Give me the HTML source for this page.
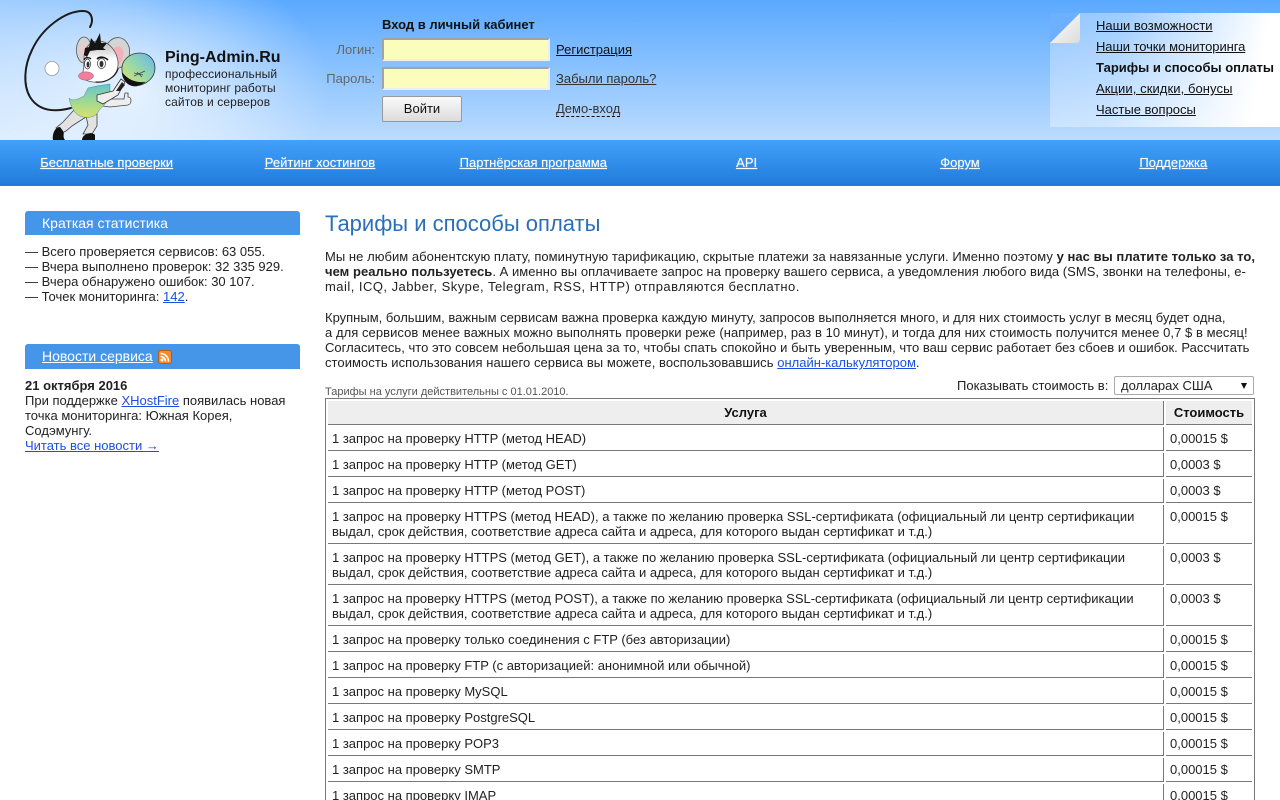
<!DOCTYPE html>
<html lang="ru"><head><meta charset="utf-8"><title>Тарифы и способы оплаты</title>
<style>
html,body{margin:0;padding:0;width:1280px;height:800px;overflow:hidden;background:#fff}
body{position:relative;font:13px/15px "Liberation Sans",Arial,sans-serif;color:#222}
.a{position:absolute;white-space:nowrap}
a{color:inherit;text-decoration:underline}
#hd{position:absolute;left:0;top:0;width:1280px;height:140px;background:radial-gradient(ellipse 195px 135px at 135px 90px,rgba(255,255,255,.72),rgba(255,255,255,.4) 50%,rgba(255,255,255,0)),linear-gradient(90deg,rgba(255,255,255,.4),rgba(255,255,255,0) 170px),linear-gradient(#5aa9ff,#bcdcff)}
#nav{position:absolute;left:0;top:140px;width:1280px;height:46px;background:linear-gradient(#42a1fb,#207ad9)}
#nav a{position:absolute;top:15px;width:213.33px;text-align:center;color:#fff;text-shadow:0 0 1px rgba(255,255,255,.5)}
#nav a span{text-decoration:underline}
.inp{position:absolute;left:382px;width:164px;height:19px;background:#fbfdbd;border:2px solid;border-color:#a3a3a3 #eee #eee #a3a3a3}
.lbl{color:#666;right:905px}
#btn{position:absolute;left:382px;top:96px;width:78px;height:24px;border:1px solid #999;border-radius:2px;background:linear-gradient(#fafafa,#dcdcdc);text-align:center;line-height:24px;color:#111}
#page{position:absolute;left:1050px;top:13px;width:230px;height:114px;background:linear-gradient(100deg,rgba(255,255,255,.3),rgba(255,255,255,.38) 30%,#fff 88%)}
.m{left:1096px;color:#111}
.sh{position:absolute;left:25px;width:258px;padding-left:17px;background:#4596e9;border-radius:3px 3px 0 0;color:#fff;font-size:14px}
table{position:absolute;left:325px;top:398px;width:930px;border:1px solid #777;border-spacing:2px;border-collapse:separate;table-layout:fixed}
td,th{padding:4px 0 4px 4px;border-bottom:1px solid #777;vertical-align:top;text-align:left;font-weight:normal}
th{font-weight:bold;background:#eee;text-align:center;padding-left:0;color:#111}
.c1{border-right:1px solid #777}
</style></head><body>
<div id="hd"></div>
<svg class="a" style="left:0;top:0" width="170" height="140" viewBox="0 0 170 140">
<defs>
<linearGradient id="pd" x1="0" y1="1" x2="1" y2="0"><stop offset="0" stop-color="#dfe46a"/><stop offset=".5" stop-color="#98d8a8"/><stop offset="1" stop-color="#62b4f2"/></linearGradient>
<linearGradient id="dr" x1="0" y1="0" x2="0" y2="1"><stop offset="0" stop-color="#62c4d0"/><stop offset=".45" stop-color="#98d69a"/><stop offset="1" stop-color="#d6e268"/></linearGradient>
<linearGradient id="hg" x1="0" y1="0" x2="0" y2="1"><stop offset=".1" stop-color="#c4c4c4"/><stop offset=".45" stop-color="#fff"/><stop offset="1" stop-color="#fff"/></linearGradient>
</defs>
<path d="M90 27C94 20 92 11 83 11C65 11 42 28 32 50C24 66 23 85 30 97C38 110 52 113 71 108" fill="none" stroke="#1c1c1c" stroke-width="2" stroke-linecap="round"/>
<circle cx="52" cy="68.500" r="7" fill="#fff" stroke="#999" stroke-width=".8"/>
<path d="M74 110L86 117L72 126L66 131L60 134L56 128L63 122Z" fill="#e2e2e2" stroke="#444" stroke-width=".8"/>
<path d="M86 116L97 114L97 126L92 134L83 134L88 125Z" fill="#e2e2e2" stroke="#444" stroke-width=".8"/>
<path d="M60 127C55 127 52 134 53 140L65 140C62 136 65 134 63 131Z" fill="#111"/>
<path d="M82 140C82 134 92 131 95 135L95 140Z" fill="#111"/>
<path d="M93 99L124 99L125 93L128 93L128 97C132 97 132 104 128 105L110 107L95 105Z" fill="#eee" stroke="#444" stroke-width=".8"/>
<path d="M97 86L110 84L110 92L107 100C106 105 100 108 98 112C96 117 86 119 80 116C75 114 71 108 69 98C73 102 78 99 84 96L88 88Z" fill="url(#dr)" stroke="#489" stroke-width=".5"/>
<path d="M97 95L113 91L121 79L125 82L118 95L103 104L97 101Z" fill="#eee" stroke="#333" stroke-width=".8"/>
<path d="M116 91L122 82L125 85L120 91Z" fill="#222"/>
<ellipse cx="84" cy="50" rx="7.500" ry="13" fill="#d4d4d4" stroke="#555" stroke-width=".8"/>
<path d="M83 43C80 46 80 54 83 59C86 54 86 47 83 43Z" fill="#f6c4ca"/>
<ellipse cx="117" cy="53" rx="12.500" ry="15.500" transform="rotate(10 117 53)" fill="#d4d4d4" stroke="#555" stroke-width=".8"/>
<ellipse cx="117" cy="56" rx="6" ry="10" transform="rotate(14 117 56)" fill="#f4b0ba"/>
<path d="M84 58C84 46 92 40 100 41C110 42 117 52 118 62C119 72 112 80 102 82C92 83 84 81 81 76C84 72 84 66 84 58Z" fill="url(#hg)" stroke="#555" stroke-width=".8"/>
<path d="M84 55L85 48L89 47L91 38L95 43L100 33L101 43L107 43L103 48L106 50L97 50L90 51L87 57Z" fill="#151515"/>
<ellipse cx="87.500" cy="64" rx="3" ry="5" fill="#fff" stroke="#333" stroke-width=".7"/>
<ellipse cx="101.500" cy="63.500" rx="4" ry="5" fill="#fff" stroke="#333" stroke-width=".7"/>
<path d="M97 59C100 56 105 57 108 60" fill="none" stroke="#111" stroke-width="1.600"/>
<path d="M84 60C85 57 89 57 91 59" fill="none" stroke="#111" stroke-width="1.200"/>
<ellipse cx="88" cy="64.500" rx="1.500" ry="3" fill="#333"/><ellipse cx="101.500" cy="64" rx="2" ry="3.200" fill="#333"/>
<path d="M96 82C105 83 115 78 118 69" fill="none" stroke="#222" stroke-width="1.200" stroke-linecap="round"/>
<ellipse cx="86" cy="76" rx="7.500" ry="4.200" fill="#f07f9c" stroke="#a55a6a" stroke-width=".5"/>
<path d="M122 70C121 60 130 53 140 53C150 53 155 61 155 68C155 78 146 85 136 86C127 86 122 79 122 70Z" fill="url(#pd)" stroke="#333" stroke-width=".8"/>
<path d="M122 72C127 79 135 83 146 82C141 85 138 86 134 86C127 86 123 79 122 72Z" fill="#111"/>
<path d="M134 76L145 71M137 72L142 77M134 73L143 75" stroke="#444" stroke-width=".7" fill="none"/>
</svg>
<div class="a" style="left:165px;top:50px;font-size:16px;line-height:16px;font-weight:bold;color:#111">Ping-Admin.Ru</div>
<div class="a" style="left:165px;top:67px;font-size:12px;line-height:14px;color:#222;letter-spacing:.12px">профессиональный<br>мониторинг работы<br>сайтов и серверов</div>

<div class="a" style="left:382px;top:17px;font-weight:bold;color:#111">Вход в личный кабинет</div>
<div class="a lbl" style="top:42px">Логин:</div>
<div class="a lbl" style="top:71px">Пароль:</div>
<div class="inp" style="top:38px"></div>
<div class="inp" style="top:67px"></div>
<div id="btn">Войти</div>
<a class="a" style="left:556px;top:42px;color:#111" href="#">Регистрация</a>
<a class="a" style="left:556px;top:71px;color:#333" href="#">Забыли пароль?</a>
<div class="a" style="left:556px;top:101px;color:#333;border-bottom:1px dashed #111;height:15px">Демо-вход</div>

<div id="page"></div>
<svg class="a" style="left:1050px;top:13px" width="32" height="32" viewBox="0 0 32 32"><defs><linearGradient id="fo" x1="0" y1="0" x2="1" y2="1"><stop offset="0" stop-color="#fff"/><stop offset="1" stop-color="#dcdcdc"/></linearGradient></defs><path d="M0 0H30V29H0Z" fill="#6cb0ff"/><path d="M0 30L30 0V26Q30 30 26 30Z" fill="url(#fo)"/><path d="M0 30H26Q30 30 30 26V30Z" fill="#a9d2ff"/></svg>
<a class="a m" style="top:18px" href="#">Наши возможности</a>
<a class="a m" style="top:39px;letter-spacing:-.08px" href="#">Наши точки мониторинга</a>
<div class="a m" style="top:60px;font-weight:bold">Тарифы и способы оплаты</div>
<a class="a m" style="top:81px;letter-spacing:.08px" href="#">Акции, скидки, бонусы</a>
<a class="a m" style="top:102px" href="#">Частые вопросы</a>

<div id="nav">
<a style="left:0" href="#"><span>Бесплатные проверки</span></a>
<a style="left:213.33px" href="#"><span>Рейтинг хостингов</span></a>
<a style="left:426.67px" href="#"><span>Партнёрская программа</span></a>
<a style="left:640px" href="#"><span>API</span></a>
<a style="left:853.33px" href="#"><span>Форум</span></a>
<a style="left:1066.67px" href="#"><span>Поддержка</span></a>
</div>

<div class="sh" style="top:211px;height:24px;line-height:24px">Краткая статистика</div>
<div class="a" style="left:25px;top:244px">— Всего проверяется сервисов: 63 055.<br>— Вчера выполнено проверок: 32 335 929.<br>— Вчера обнаружено ошибок: 30 107.<br>— Точек мониторинга: <a href="#" style="color:#1a4fe0">142</a>.</div>
<div class="sh" style="top:344px;height:25px;line-height:25px"><a href="#">Новости сервиса</a></div>
<svg class="a" style="left:158px;top:350px" width="14" height="14" viewBox="0 0 14 14"><rect x=".5" y=".5" width="13" height="13" rx="2" fill="#f58a2c" stroke="#b85f16"/><circle cx="4" cy="10" r="1.5" fill="#fff"/><path d="M2.5 6.5A5 5 0 0 1 7.5 11.5M2.5 3.5A8 8 0 0 1 10.5 11.5" fill="none" stroke="#fff" stroke-width="1.6"/></svg>
<div class="a" style="left:25px;top:378px"><b>21 октября 2016</b><br>При поддержке <a href="#" style="color:#1a4fe0">XHostFire</a> появилась новая<br>точка мониторинга: Южная Корея,<br>Содэмунгу.<br><a href="#" style="color:#1a4fe0">Читать все новости →</a></div>

<div class="a" style="left:325px;top:211px;font-size:22px;line-height:26px;color:#2b6fb8">Тарифы и способы оплаты</div>
<div class="a" style="left:325px;top:249px"><span style="letter-spacing:.043px">Мы не любим абонентскую плату, поминутную тарификацию, скрытые платежи за навязанные услуги. Именно поэтому <b>у нас вы платите только за то,</b></span><br><span style="letter-spacing:.035px"><b>чем реально пользуетесь</b>. А именно вы оплачиваете запрос на проверку вашего сервиса, а уведомления любого вида (SMS, звонки на телефоны, e-</span><br><span style="letter-spacing:.47px">mail, ICQ, Jabber, Skype, Telegram, RSS, HTTP) отправляются бесплатно.</span></div>
<div class="a" style="left:325px;top:310px"><span style="letter-spacing:-.005px">Крупным, большим, важным сервисам важна проверка каждую минуту, запросов выполняется много, и для них стоимость услуг в месяц будет одна,</span><br><span style="letter-spacing:.055px">а для сервисов менее важных можно выполнять проверки реже (например, раз в 10 минут), и тогда для них стоимость получится менее 0,7 $ в месяц!</span><br><span style="letter-spacing:.022px">Согласитесь, что это совсем небольшая цена за то, чтобы спать спокойно и быть уверенным, что ваш сервис работает без сбоев и ошибок. Рассчитать</span><br><span style="letter-spacing:.05px">стоимость использования нашего сервиса вы можете, воспользовавшись </span><a href="#" style="color:#1a4fe0">онлайн-калькулятором</a>.</div>
<div class="a" style="left:325px;top:385px;font-size:11px;color:#555">Тарифы на услуги действительны с 01.01.2010.</div>
<div class="a" style="left:957px;top:378px">Показывать стоимость в:</div>
<div class="a" style="left:1114px;top:376px;width:132px;height:17px;padding-left:6px;border:1px solid #aaa;border-radius:2px;background:#fff;line-height:17px">долларах США<span style="position:absolute;right:6px;top:6px;width:0;height:0;border:3px solid transparent;border-top:6px solid #111;border-bottom:0"></span></div>

<table>
<colgroup><col style="width:836px"><col style="width:86px"></colgroup>
<tr><th class="c1">Услуга</th><th>Стоимость</th></tr>
<tr><td class="c1">1 запрос на проверку HTTP (метод HEAD)</td><td>0,00015 $</td></tr>
<tr><td class="c1">1 запрос на проверку HTTP (метод GET)</td><td>0,0003 $</td></tr>
<tr><td class="c1">1 запрос на проверку HTTP (метод POST)</td><td>0,0003 $</td></tr>
<tr><td class="c1">1 запрос на проверку HTTPS (метод HEAD), а также по желанию проверка SSL-сертификата (официальный ли центр сертификации<br>выдал, срок действия, соответствие адреса сайта и адреса, для которого выдан сертификат и т.д.)</td><td>0,00015 $</td></tr>
<tr><td class="c1">1 запрос на проверку HTTPS (метод GET), а также по желанию проверка SSL-сертификата (официальный ли центр сертификации<br>выдал, срок действия, соответствие адреса сайта и адреса, для которого выдан сертификат и т.д.)</td><td>0,0003 $</td></tr>
<tr><td class="c1">1 запрос на проверку HTTPS (метод POST), а также по желанию проверка SSL-сертификата (официальный ли центр сертификации<br>выдал, срок действия, соответствие адреса сайта и адреса, для которого выдан сертификат и т.д.)</td><td>0,0003 $</td></tr>
<tr><td class="c1">1 запрос на проверку только соединения с FTP (без авторизации)</td><td>0,00015 $</td></tr>
<tr><td class="c1">1 запрос на проверку FTP (с авторизацией: анонимной или обычной)</td><td>0,00015 $</td></tr>
<tr><td class="c1">1 запрос на проверку MySQL</td><td>0,00015 $</td></tr>
<tr><td class="c1">1 запрос на проверку PostgreSQL</td><td>0,00015 $</td></tr>
<tr><td class="c1">1 запрос на проверку POP3</td><td>0,00015 $</td></tr>
<tr><td class="c1">1 запрос на проверку SMTP</td><td>0,00015 $</td></tr>
<tr><td class="c1">1 запрос на проверку IMAP</td><td>0,00015 $</td></tr>
</table>
</body></html>
